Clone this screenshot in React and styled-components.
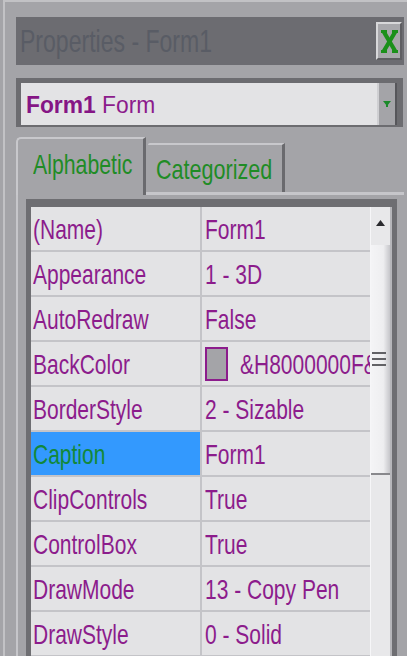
import styled, { createGlobalStyle } from 'styled-components'

const GlobalStyle = createGlobalStyle`
  html, body {
    margin: 0;
    padding: 0;
    background: #a4a4a8;
  }
  body {
    width: 407px;
    height: 656px;
    overflow: hidden;
    font-family: "Liberation Sans", Arial, sans-serif;
  }
`

const Shell = styled.div`
  width: 407px;
  height: 656px;
  box-sizing: border-box;
  padding: 17px 3px 0 16px;
  background: #a4a4a8;
  box-shadow: inset 3px 0 0 #a4a4a8, inset 5px 0 0 #c2c2c5, inset 0 2px 0 #c2c2c5;
  display: flex;
  flex-direction: column;
  overflow: hidden;
`

// narrow look of the old dialog font
const Squeeze = styled.span`
  display: inline-block;
  white-space: nowrap;
  transform: scaleX(${p => p.$sx || 0.75});
  transform-origin: left center;
`

const TitleBar = styled.div`
  height: 48px;
  flex-shrink: 0;
  background: #6c6c71;
  display: flex;
  align-items: center;
  justify-content: space-between;
  padding: 0 2px 0 4px;
`

const Title = styled.div`
  font-size: 32px;
  line-height: 48px;
  color: #595c65;
`

const CloseButton = styled.div`
  width: 22px;
  height: 34px;
  background: #a8a8ac;
  border: 2px solid;
  border-color: #d8d8da #5e5e62 #5e5e62 #d8d8da;
  display: grid;
  place-items: center;
`

const Combo = styled.div`
  margin: 13px 1px 0 0;
  height: 49px;
  flex-shrink: 0;
  box-sizing: border-box;
  background: #6c6c70;
  padding: 5px 6px 2px 5px;
  display: flex;
`

const ComboField = styled.div`
  flex: 1;
  min-width: 0;
  background: #e3e3e5;
  padding: 2px 0 0 5px;
  font-size: 24px;
  line-height: 40px;
  color: #8c1c8c;
  overflow: hidden;

  b {
    font-weight: 700;
    color: #851585;
  }
`

const ComboButton = styled.div`
  width: 16px;
  background: #a4a4a8;
  border-left: 2px solid #cfcfd2;
  border-right: 2px solid #56565a;
  display: grid;
  place-items: center;
`

const TabRow = styled.div`
  margin-top: 10px;
  height: 55px;
  flex-shrink: 0;
  display: flex;
  align-items: flex-end;
  position: relative;
  z-index: 1;
`

const Tab = styled.div`
  box-sizing: border-box;
  width: ${p => (p.$active ? '130px' : '137px')};
  height: ${p => (p.$active ? '58px' : '49px')};
  margin-bottom: ${p => (p.$active ? '-3px' : '0')};
  margin-left: ${p => (p.$active ? '0' : '2px')};
  background: #a4a4a8;
  border-top: 2px solid #c8c8cc;
  border-left: ${p => (p.$active ? '2px solid #c8c8cc' : '0')};
  border-right: 3px solid #6a6a6e;
  border-top-left-radius: ${p => (p.$active ? '5px' : '2px')};
  padding: ${p => (p.$active ? '10px 0 0 15px' : '9px 0 0 8px')};
  font-size: 28px;
  line-height: 32px;
  color: #1f8c26;
`

const Panel = styled.div`
  flex: 1;
  box-sizing: border-box;
  border-top: 3px solid #c6c6ca;
  border-left: 2px solid #c6c6ca;
  padding: 4px 7px 0 8px;
  display: flex;
  min-height: 0;
`

const GridFrame = styled.div`
  flex: 1;
  min-width: 0;
  background: #6e6e72;
  padding: 8px 5px 0 5px;
  display: flex;
  min-height: 0;
`

const Grid = styled.div`
  flex: 1;
  min-width: 0;
  overflow: hidden;
`

const Row = styled.div`
  display: flex;
  height: 43px;
  background: #e3e3e5;
  border-bottom: 2px solid #c4c4c8;
  font-size: 28px;
  line-height: 41px;
  color: #8c1c8c;
`

const NameCell = styled.div`
  width: 171px;
  flex-shrink: 0;
  box-sizing: border-box;
  padding: 2px 0 0 2px;
  border-right: 2px solid #c4c4c8;
  background: ${p => (p.$selected ? '#3399fe' : 'transparent')};
  color: ${p => (p.$selected ? '#12883a' : 'inherit')};
  overflow: hidden;
`

const ValueCell = styled.div`
  flex: 1;
  min-width: 0;
  padding: 2px 0 0 3px;
  display: flex;
  align-items: center;
  overflow: hidden;
`

const Swatch = styled.span`
  flex-shrink: 0;
  width: 19px;
  height: 30px;
  margin: 0 12px 2px 0;
  border: 2px solid #8c1c8c;
  background: #a4a4a8;
`

const Scroll = styled.div`
  width: 22px;
  flex-shrink: 0;
  box-sizing: border-box;
  background: #e8e8ea;
  border-left: 1px solid #f6f6f8;
  border-right: 2px solid #b6b6ba;
  display: flex;
  flex-direction: column;
`

const ArrowBox = styled.div`
  height: 36px;
  display: grid;
  place-items: center;
  padding-bottom: 4px;
  box-sizing: border-box;
`

const Thumb = styled.div`
  margin-top: 2px;
  height: 230px;
  box-sizing: border-box;
  background: linear-gradient(to right, #f4f4f6 0%, #eeeef0 65%, #c6c6ca 100%);
  border-bottom: 2px solid #88888c;
  display: flex;
  flex-direction: column;
  justify-content: center;
  gap: 4px;
  padding: 0 4px 0 1px;
`

const Grip = styled.span`
  height: 2px;
  background: #626266;
`

const props = [
  ['(Name)', 'Form1'],
  ['Appearance', '1 - 3D'],
  ['AutoRedraw', 'False'],
  ['BackColor', '&H8000000F&', true],
  ['BorderStyle', '2 - Sizable'],
  ['Caption', 'Form1'],
  ['ClipControls', 'True'],
  ['ControlBox', 'True'],
  ['DrawMode', '13 - Copy Pen'],
  ['DrawStyle', '0 - Solid'],
]

const App = () => {
  return (
    <>
      <GlobalStyle />
      <Shell>
        <TitleBar>
          <Title>
            <Squeeze $sx={0.72}>Properties - Form1</Squeeze>
          </Title>
          <CloseButton>
            <svg width="17" height="25" viewBox="0 0 17 25">
              <g stroke="#1b901b" strokeWidth="4.2" strokeLinecap="square">
                <line x1="3.5" y1="4" x2="13.5" y2="21" />
                <line x1="13.5" y1="4" x2="3.5" y2="21" />
              </g>
              <g fill="#1b901b">
                <rect x="0" y="1" width="6" height="3" />
                <rect x="11" y="1" width="6" height="3" />
                <rect x="0" y="21" width="6" height="3" />
                <rect x="11" y="21" width="6" height="3" />
              </g>
            </svg>
          </CloseButton>
        </TitleBar>

        <Combo>
          <ComboField>
            <Squeeze $sx={0.95}>
              <b>Form1</b> Form
            </Squeeze>
          </ComboField>
          <ComboButton>
            <svg width="8" height="8" viewBox="0 0 8 8">
              <polygon points="0,1 8,1 4,6" fill="#1b8a2a" />
              <rect x="3" y="5" width="2" height="2" fill="#1b8a2a" />
            </svg>
          </ComboButton>
        </Combo>

        <TabRow>
          <Tab $active>
            <Squeeze $sx={0.76}>Alphabetic</Squeeze>
          </Tab>
          <Tab>
            <Squeeze $sx={0.77}>Categorized</Squeeze>
          </Tab>
        </TabRow>

        <Panel>
          <GridFrame>
            <Grid>
              {props.map(([name, value, swatch]) => (
                <Row key={name}>
                  <NameCell $selected={name === 'Caption'}>
                    <Squeeze>{name}</Squeeze>
                  </NameCell>
                  <ValueCell>
                    {swatch && <Swatch />}
                    <Squeeze>{value}</Squeeze>
                  </ValueCell>
                </Row>
              ))}
            </Grid>
            <Scroll>
              <ArrowBox>
                <svg width="9" height="6" viewBox="0 0 9 6">
                  <polygon points="4.5,0 9,6 0,6" fill="#2a2a2e" />
                </svg>
              </ArrowBox>
              <Thumb>
                <Grip />
                <Grip />
                <Grip />
              </Thumb>
            </Scroll>
          </GridFrame>
        </Panel>
      </Shell>
    </>
  )
}

export default App
